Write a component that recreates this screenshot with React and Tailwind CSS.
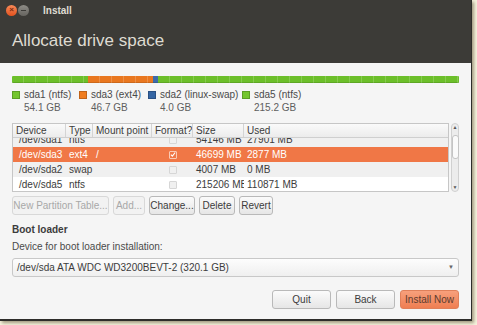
import React from 'react';

const font = { fontFamily: '"Liberation Sans", Arial, sans-serif' };

const segments = [
    { w: 76, color: 'bg-[#6cbf2a]' },
    { w: 65, color: 'bg-[#e9771f]' },
    { w: 5, color: 'bg-[#3c6aaa]' },
    { w: 301, color: 'bg-[#6cbf2a]' },
];

const legend = [
    { name: 'sda1 (ntfs)', size: '54.1 GB', color: 'bg-[#74c62d]', w: 'w-[67px]' },
    { name: 'sda3 (ext4)', size: '46.7 GB', color: 'bg-[#f07c1e]', w: 'w-[69px]' },
    { name: 'sda2 (linux-swap)', size: '4.0 GB', color: 'bg-[#3465a4]', w: 'w-[94px]' },
    { name: 'sda5 (ntfs)', size: '215.2 GB', color: 'bg-[#74c62d]', w: 'w-[80px]' },
];

const cols = [
    { label: 'Device', w: 'w-[53px]' },
    { label: 'Type', w: 'w-[27px]' },
    { label: 'Mount point', w: 'w-[59px]' },
    { label: 'Format?', w: 'w-[41px]' },
    { label: 'Size', w: 'w-[51px]' },
    { label: 'Used', w: 'flex-1' },
];

const rows = [
    { dev: '/dev/sda1', type: 'ntfs', mount: '', fmt: false, size: '54146 MB', used: '27901 MB' },
    { dev: '/dev/sda3', type: 'ext4', mount: '/', fmt: true, size: '46699 MB', used: '2877 MB', sel: true },
    { dev: '/dev/sda2', type: 'swap', mount: '', fmt: false, size: '4007 MB', used: '0 MB' },
    { dev: '/dev/sda5', type: 'ntfs', mount: '', fmt: false, size: '215206 MB', used: '110871 MB' },
];

const Btn = ({ children, disabled, w, primary }) => (
    <div
        className={`h-[19px] ${w} flex items-center justify-center whitespace-nowrap rounded-[3px] border text-[10px] ${
            primary
                ? 'bg-gradient-to-b from-[#f7a07c] to-[#ef7e52] border-[#e0805a] text-[#5a3a2e]'
                : disabled
                ? 'bg-[#f2f2f2] border-[#d8d8d8] text-[#a8a8a8]'
                : 'bg-gradient-to-b from-[#fbfbfb] to-[#e6e6e6] border-[#b9b9b9] text-[#3c3c3c]'
        }`}
    >
        {children}
    </div>
);

const Check = ({ on }) => (
    <div className={`w-[8px] h-[8px] rounded-[1px] border ${on ? 'border-[#f9c9b4]' : 'border-[#d6d6d6] bg-[#f0f0f0]'} flex items-center justify-center`}>
        {on && (
            <svg width="7" height="7" viewBox="0 0 7 7">
                <path d="M1 3.6 L2.8 5.4 L6 1.2" stroke="#fff" strokeWidth="1.3" fill="none" />
            </svg>
        )}
    </div>
);

export default function App() {
    return (
        <div className="w-[477px] h-[325px] bg-[#f6f2dc] overflow-hidden" style={font}>
            <div className="w-[472px] h-[321px] bg-[#f5f5f5] border-r border-b-2 border-[#2e2d2a] flex flex-col shadow-[2px_2px_3px_rgba(80,70,40,0.5)]">
                {/* Title bar + header */}
                <div className="bg-[#3c3b37] h-[63px] shrink-0 flex flex-col">
                    <div className="h-[20px] flex items-center pl-[6px]">
                        <div className="w-[11px] h-[11px] rounded-full bg-gradient-to-b from-[#f98a57] to-[#e2511c] flex items-center justify-center">
                            <span className="text-[8px] leading-none text-[#7a2a10] font-bold">×</span>
                        </div>
                        <div className="w-[11px] h-[11px] rounded-full bg-gradient-to-b from-[#8e8c86] to-[#66645f] ml-[1px] flex items-center justify-center">
                            <div className="w-[5px] h-[1px] bg-[#3c3b37]" />
                        </div>
                        <span className="ml-[14px] text-[10px] font-bold text-[#dfdbd2] mt-[1px]">Install</span>
                    </div>
                    <div className="pl-[12px] pt-[12px] text-[17px] leading-none text-[#dfdbd2]">Allocate drive space</div>
                </div>

                <div className="px-[12px] flex flex-col">
                    {/* Partition bar */}
                    <div className="mt-[13px] h-[7px] w-[447px] flex rounded-[1px] overflow-hidden">
                        {segments.map((s, i) => (
                            <div
                                key={i}
                                className={`${s.color} h-full bg-[repeating-linear-gradient(90deg,transparent_0px,transparent_11px,rgba(255,255,255,0.18)_11px,rgba(255,255,255,0.18)_12px)] shadow-[inset_0_-1px_0_rgba(0,0,0,0.12)]`}
                                style={{ width: s.w }}
                            />
                        ))}
                    </div>

                    {/* Legend */}
                    <div className="flex mt-[5px] text-[10px] leading-[13px] text-[#4a4a4a]">
                        {legend.map((l) => (
                            <div key={l.name} className={`flex ${l.w}`}>
                                <div className={`w-[8px] h-[8px] mt-[3px] ${l.color} border border-black/20`} />
                                <div className="ml-[4px] whitespace-nowrap">
                                    <div>{l.name}</div>
                                    <div className="text-[#5e5e5e]">{l.size}</div>
                                </div>
                            </div>
                        ))}
                    </div>

                    {/* Table */}
                    <div className="mt-[9px] flex h-[69px] w-[447px]">
                        <div className="w-[437px] border border-[#c6c6c6] bg-white flex flex-col text-[10px] text-[#3c3c3c]">
                            <div className="h-[14px] shrink-0 flex bg-gradient-to-b from-[#fafafa] to-[#ececec] border-b border-[#cfcfcf]">
                                {cols.map((c) => (
                                    <div key={c.label} className={`${c.w} shrink-0 whitespace-nowrap overflow-hidden border-r border-[#d4d4d4] pl-[3px] leading-[14px] last:border-r-0 last:shrink`}>
                                        {c.label}
                                    </div>
                                ))}
                            </div>
                            <div className="flex-1 overflow-hidden">
                                <div className="-mt-[6px]">
                                    {rows.map((r, i) => (
                                        <div
                                            key={r.dev}
                                            className={`h-[15px] flex items-center whitespace-nowrap ${
                                                r.sel ? 'bg-[#f07746] text-white' : i % 2 === 0 ? 'bg-[#f0f0f0]' : 'bg-white'
                                            }`}
                                        >
                                            <div className="w-[53px] shrink-0 pl-[6px]">{r.dev}</div>
                                            <div className="w-[27px] shrink-0 pl-[3px]">{r.type}</div>
                                            <div className="w-[59px] shrink-0 pl-[3px]">{r.mount}</div>
                                            <div className="w-[41px] shrink-0 flex justify-center">
                                                <Check on={r.fmt} />
                                            </div>
                                            <div className="w-[51px] shrink-0 pl-[3px] overflow-hidden">{r.size}</div>
                                            <div className="flex-1 pl-[3px]">{r.used}</div>
                                        </div>
                                    ))}
                                </div>
                            </div>
                        </div>
                        {/* Scrollbar */}
                        <div className="ml-auto w-[8px] flex flex-col items-center bg-[#ececec] rounded-[4px] border border-[#d0d0d0]">
                            <span className="text-[5px] leading-[7px] text-[#555]">▲</span>
                            <div className="mt-[4px] w-[7px] h-[24px] rounded-[3px] bg-[#fafafa] border border-[#c4c4c4]" />
                            <div className="flex-1" />
                            <span className="text-[5px] leading-[7px] text-[#555]">▼</span>
                        </div>
                    </div>

                    {/* Partition buttons */}
                    <div className="flex gap-[4px] mt-[4px]">
                        <Btn disabled w="w-[97px]">New Partition Table...</Btn>
                        <Btn disabled w="w-[32px]">Add...</Btn>
                        <Btn w="w-[46px]">Change...</Btn>
                        <Btn w="w-[36px]">Delete</Btn>
                        <Btn w="w-[34px]">Revert</Btn>
                    </div>

                    {/* Boot loader */}
                    <div className="mt-[7px] text-[10px] font-bold text-[#3c3c3c]">Boot loader</div>
                    <div className="mt-[2px] text-[10px] text-[#4a4a4a]">Device for boot loader installation:</div>
                    <div className="mt-[4px] w-[447px] h-[19px] rounded-[3px] border border-[#c8c8c8] bg-gradient-to-b from-[#fdfdfd] to-[#efefef] flex items-center px-[4px] text-[10px] text-[#3c3c3c]">
                        <span className="flex-1">/dev/sda ATA WDC WD3200BEVT-2 (320.1 GB)</span>
                        <span className="text-[6px] text-[#666]">▼</span>
                    </div>

                    {/* Bottom buttons */}
                    <div className="flex justify-end gap-[5px] mt-[13px] w-[447px]">
                        <Btn w="w-[59px]">Quit</Btn>
                        <Btn w="w-[59px]">Back</Btn>
                        <Btn primary w="w-[59px]">Install Now</Btn>
                    </div>
                </div>
            </div>
        </div>
    );
}
